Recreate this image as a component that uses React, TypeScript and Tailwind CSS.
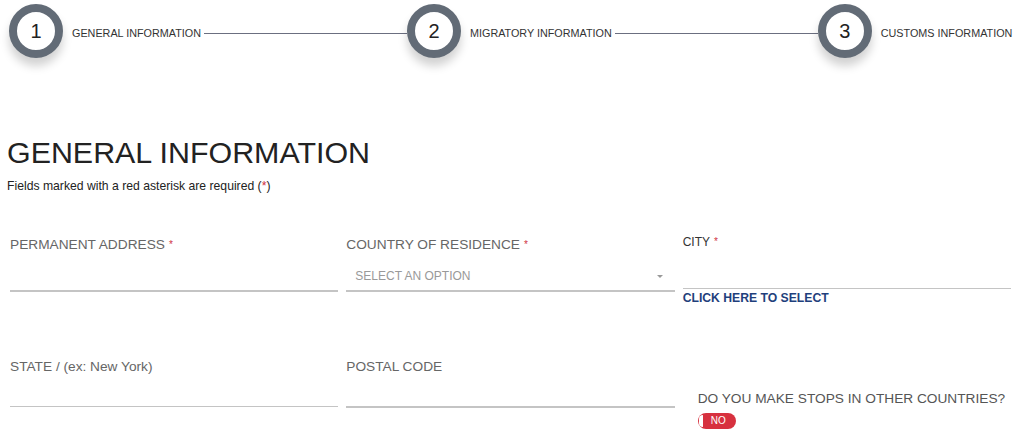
import React from 'react';

const steps = [
  { n: 1, label: 'GENERAL INFORMATION', line: true },
  { n: 2, label: 'MIGRATORY INFORMATION', line: true },
  { n: 3, label: 'CUSTOMS INFORMATION', line: false },
];

const Req = () => <span className="ml-1 text-[10px] align-top text-[#d0323f]">*</span>;

const App: React.FC = () => {
  return (
    <div className="h-[444px] w-[1024px] overflow-hidden bg-white font-['Liberation_Sans',Arial,sans-serif]">
      {/* Stepper */}
      <div className="flex items-center pl-[9px] pt-[4px]">
        {steps.map((s) => (
          <div key={s.n} className="flex items-center">
            <div className="flex h-[54px] w-[54px] items-center justify-center rounded-full border-[8px] border-[#626b76] bg-white text-[20px] text-[#222] shadow-[0_8px_10px_rgba(0,0,0,0.18)]">
              {s.n}
            </div>
            <div className="mt-[5px] flex items-center">
              <span className="ml-[9px] text-[10.8px] text-[#333]">{s.label}</span>
              {s.line && <div className="ml-[3px] h-px w-[203px] bg-[#6b6f80]" />}
            </div>
          </div>
        ))}
      </div>

      {/* Title */}
      <div className="pl-[7px] pt-[76px]">
        <h1 className="text-[30.4px] leading-[36px] text-[#222]">GENERAL INFORMATION</h1>
        <p className="mt-[8px] text-[12.2px] leading-[16px] text-[#222]">
          Fields marked with a red asterisk are required (<span className="text-[#d0323f]">*</span>)
        </p>
      </div>

      {/* Form row 1 */}
      <div className="mt-[43px] grid grid-cols-3 items-start gap-x-[8px] pl-[10px] pr-[13px]">
        <div className="flex flex-col">
          <label className="text-[13.7px] leading-[16px] text-[#666]">
            PERMANENT ADDRESS<Req />
          </label>
          <div className="mt-[37px] h-[2px] bg-[#c4c4c4]" />
        </div>
        <div className="flex flex-col">
          <label className="text-[13.7px] leading-[16px] text-[#666]">
            COUNTRY OF RESIDENCE<Req />
          </label>
          <div className="mt-[15px] flex items-center justify-between px-[9px] pb-[6px]">
            <span className="text-[12px] leading-[16px] text-[#999]">SELECT AN OPTION</span>
            <span className="mr-[3px] h-0 w-0 border-x-[3px] border-t-[3px] border-x-transparent border-t-[#999]" />
          </div>
          <div className="h-[2px] bg-[#c4c4c4]" />
        </div>
        <div className="-mt-[3px] flex flex-col">
          <label className="text-[12px] leading-[16px] text-[#333]">
            CITY<Req />
          </label>
          <div className="mt-[38px] h-px bg-[#c4c4c4]" />
          <span className="mt-[1px] text-[12.2px] leading-[16px] font-bold text-[#1f3f7c]">CLICK HERE TO SELECT</span>
        </div>
      </div>

      {/* Form row 2 */}
      <div className="mt-[53px] grid grid-cols-3 items-start gap-x-[8px] pl-[10px] pr-[13px]">
        <div className="flex flex-col">
          <label className="text-[13.7px] leading-[16px] text-[#666]">STATE / (ex: New York)</label>
          <div className="mt-[31px] h-px bg-[#c4c4c4]" />
        </div>
        <div className="flex flex-col">
          <label className="text-[13.7px] leading-[16px] text-[#666]">POSTAL CODE</label>
          <div className="mt-[31px] h-[2px] bg-[#c4c4c4]" />
        </div>
        <div className="mt-[32px] flex flex-col pl-[15px]">
          <label className="text-[13.7px] leading-[16px] text-[#555]">DO YOU MAKE STOPS IN OTHER COUNTRIES?</label>
          <div className="relative mt-[6px] flex h-[16px] w-[38px] items-center rounded-full bg-[#d7313f]">
            <span className="absolute left-[1px] top-[2px] h-[12px] w-[4px] rounded-l-full bg-white" />
            <span className="ml-[13px] text-[10px] leading-none text-white">NO</span>
          </div>
        </div>
      </div>
    </div>
  );
};

export default App;
